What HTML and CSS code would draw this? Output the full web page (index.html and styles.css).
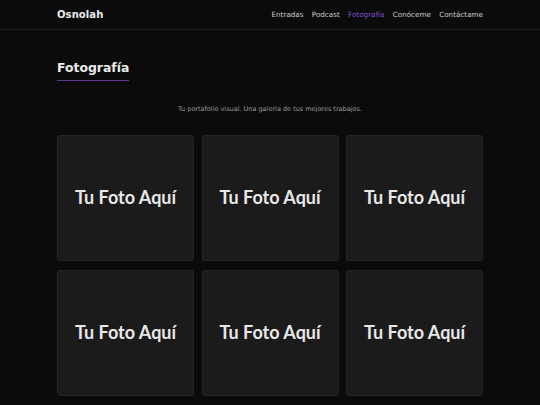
FILE: index.html
```html
<!DOCTYPE html>
<html lang="es">
<head>
<meta charset="utf-8">
<title>Fotografía - Osnolah</title>
<link rel="stylesheet" href="styles.css">
</head>
<body>
<header class="site-header">
  <div class="container header-inner">
    <a class="brand" href="#">Osnolah</a>
    <nav class="nav">
      <a href="#">Entradas</a>
      <a href="#">Podcast</a>
      <a href="#" class="active">Fotografía</a>
      <a href="#">Conóceme</a>
      <a href="#">Contáctame</a>
    </nav>
  </div>
</header>
<main class="container">
  <h1 class="page-title">Fotografía</h1>
  <p class="intro">Tu portafolio visual. Una galería de tus mejores trabajos.</p>
  <div class="gallery">
    <div class="photo">Tu Foto Aquí</div>
    <div class="photo">Tu Foto Aquí</div>
    <div class="photo">Tu Foto Aquí</div>
    <div class="photo">Tu Foto Aquí</div>
    <div class="photo">Tu Foto Aquí</div>
    <div class="photo">Tu Foto Aquí</div>
  </div>
</main>
</body>
</html>
```

FILE: styles.css
```css
* { box-sizing: border-box; }
html, body {
  margin: 0;
  background: #0b0b0b;
  color: #e6e6e6;
  font-family: "DejaVu Sans", "Open Sans", sans-serif;
}
.container {
  width: 426px;
  margin: 0 auto;
}
.site-header {
  border-bottom: 1px solid #1e1e1e;
}
.header-inner {
  height: 29px;
  display: flex;
  align-items: center;
  justify-content: space-between;
}
.brand {
  color: #ececec;
  font-weight: 700;
  font-size: 10px;
  text-decoration: none;
  letter-spacing: 0.1px;
}
.nav {
  display: flex;
  gap: 8.3px;
}
.nav a {
  color: #cfcfcf;
  font-size: 7.2px;
  text-decoration: none;
}
.nav a.active { color: #8450d6; }
.page-title {
  display: inline-block;
  margin: 30px 0 0;
  padding-bottom: 5px;
  font-size: 12.4px;
  font-weight: 700;
  color: #ececec;
  border-bottom: 1.5px solid #5e3a90;
}
.intro {
  text-align: center;
  font-size: 6.5px;
  color: #9a9a9a;
  margin: 24px 0 0;
}
.gallery {
  margin-top: 22px;
  display: grid;
  grid-template-columns: repeat(3, 1fr);
  column-gap: 7.5px;
  row-gap: 9px;
}
.photo {
  height: 126px;
  background: #1b1b1b;
  border: 1px solid #262626;
  border-radius: 3px;
  display: flex;
  align-items: center;
  justify-content: center;
  padding-bottom: 3px;
  font-family: Lato, "Open Sans", sans-serif;
  font-weight: 700;
  font-size: 18px;
  color: #e8e8e8;
}
```
